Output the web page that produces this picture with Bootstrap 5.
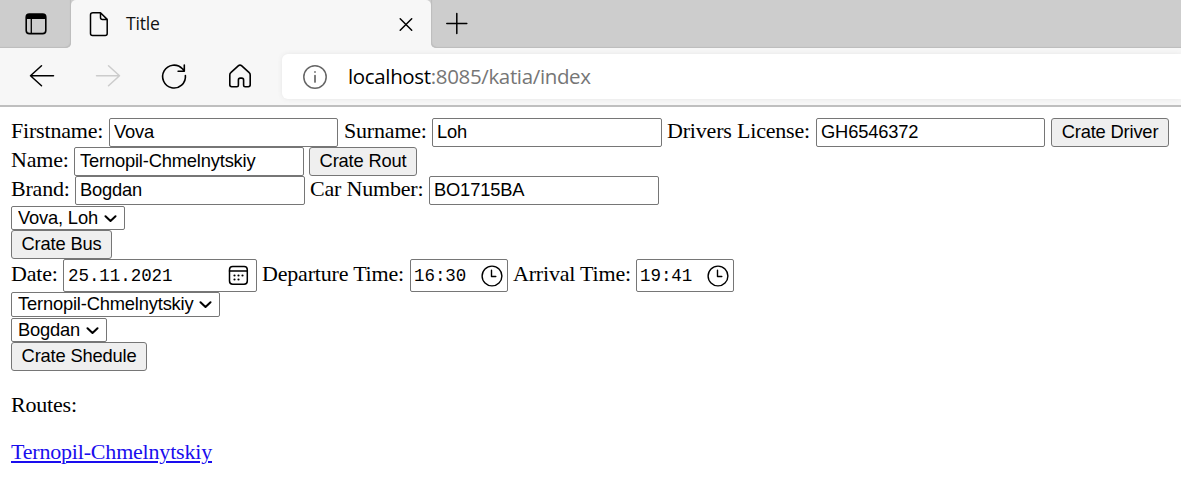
<!DOCTYPE html>
<html lang="en">
<head>
<meta charset="utf-8">
<title>Title</title>
<link href="https://cdn.jsdelivr.net/npm/bootstrap@5.3.0/dist/css/bootstrap.min.css" rel="stylesheet">
<style>
body{background:#fff;color:#000;font:22px/29px "Liberation Serif",serif;letter-spacing:-.19px;overflow:hidden}
svg{display:block;flex:none;fill:none;stroke:#000;stroke-linecap:round;stroke-linejoin:round}
.tabs{height:48px;background:#f7f7f7;font-family:"Open Sans",sans-serif}
.strip{background:#cdcdcd}
.strip-l{width:71px;border-bottom-right-radius:5px;padding:12px 0 0 24px;box-shadow:inset -1px -1px 1px #bdbdbd}
.strip-r{border-bottom-left-radius:5px;padding:12px 0 0 15px;box-shadow:inset 1px -1px 1px #bdbdbd}
.tab-slot{background:#cdcdcd linear-gradient(#f7f7f7,#f7f7f7) 0 8px no-repeat}
.tab{width:360px;padding-left:16px;background:#f7f7f7;border-radius:5px 5px 0 0}
.tab-name{font-size:17.6px;line-height:46px;height:48px;margin-left:15px;letter-spacing:-.2px;color:#111}
.tab-x{margin-right:15px}
.bar{height:59px;background:#f7f7f7;border-bottom:2px solid #bfbfbf;padding-left:28px}
.gap-nav{gap:38px;padding-top:14px}
.nav-off{stroke:#ccc}
.address{margin:6px 0 6px 28px;background:#fff;border-radius:6px 0 0 6px;padding-left:20px;box-shadow:0 0 5px #e6e6e6;font:20.5px/45px "Open Sans",sans-serif;letter-spacing:-.35px;color:#767676}
.address b{font-weight:400;color:#000}
.address-text{margin-left:20px}
.info{stroke:#666}
.page{padding:11px 0 0 11px}
.line{height:29px}
.line label{line-height:26px;white-space:nowrap;flex:none}
.box,.push,.pick{font:18.33px/21px "Liberation Sans",sans-serif;letter-spacing:-.18px;color:#000;border:1px solid #767676;border-radius:2px;flex:none;margin:0}
.box{width:230px;height:29px;padding:0 5px 2px 4px;background:#fff}
.box-s{width:229px}
.box-in{padding-left:5px}
.push{height:29px;background:#efefef;border-radius:3px;padding:0 0 2px;text-align:center;white-space:nowrap}
.pick{appearance:none;height:24px;line-height:20px;padding:0 0 1px 6px;background:#fff;width:100%;display:block}
.pick-wrap{height:24px}
.pick-wrap svg{position:absolute;right:8px;top:9px;stroke-width:2}
.stamp{height:33px;border:1px solid #767676;border-radius:2px;flex:none}
.stamp input{border:0;padding:2px 0 0;background:none;color:#000;font:17.5px/29px "Liberation Mono",monospace;letter-spacing:-.05px;min-width:0;flex:1}
.l-first{width:98px}.l-sur{width:88px;margin-left:6px}.l-lic{width:149px;margin-left:5px}
.l-name{width:63px}.l-brand{width:64px}.l-car{width:119px;margin-left:5px}
.l-date{width:52px}.l-dep{width:148px;margin-left:5px}.l-arr{width:123px;margin-left:5px}
.w-driver{width:118px;margin-left:6px}.w-rout{width:108px;margin-left:5px}.w-bus{width:101px}.w-shed{width:136px}
.s-driver{width:114px;margin-top:1px}.s-route{width:209px;height:25px}.s-bus{width:96px;margin-top:1px}
.t-date{width:194px;padding:0 7px 0 4px}.t-time{width:98px;padding:0 4px 0 3px}
.routes{margin:19px 0 18px}
.route-link{color:#1a0dee;text-decoration-thickness:2px;text-underline-offset:2px}
</style>
<script src="https://cdn.jsdelivr.net/npm/bootstrap@5.3.0/dist/js/bootstrap.bundle.min.js"></script>
</head>
<body>
<header>
  <div class="tabs d-flex">
    <div class="strip strip-l"><svg width="24" height="24" viewBox="0 0 24 24"><rect x="2.2" y="2" width="19.6" height="19.6" rx="3.2" stroke-width="1.6"/><path d="M2 7V5q0-3 3-3h14q3 0 3 3v2z" fill="#000" stroke="none"/><path d="M7.3 7v14" stroke-width="1.3"/></svg></div>
    <div class="tab-slot d-flex"><div class="tab d-flex align-items-center">
      <svg width="24" height="26" viewBox="0 0 24 26" stroke-width="1.5"><path d="M6 1.8h7.5l6.7 6.6v14q0 2-2 2H5.500q-2 0-2-2V3.800q0-2 2.500-2M13.500 1.800v4.600q0 2 2 2h4.700"/></svg>
      <span class="tab-name">Title</span>
      <svg class="ms-auto tab-x" width="20" height="20" viewBox="0 0 20 20" stroke-width="1.5"><path d="M4.2 4.700l11.500 11.500M15.700 4.700L4.200 16.200"/></svg>
    </div></div>
    <div class="strip strip-r flex-grow-1"><svg width="22" height="24" viewBox="0 0 22 24" stroke-width="1.5"><path d="M.8 11.500h20M10.800 1.500v20"/></svg></div>
  </div>
  <div class="bar d-flex">
    <div class="d-flex gap-nav">
      <svg width="28" height="28" viewBox="0 0 28 28" stroke-width="1.5"><path d="M25.500 13.700H2.500M13.500 3.700l-11 10 11 10"/></svg>
      <svg class="nav-off" width="28" height="28" viewBox="0 0 28 28" stroke-width="1.5"><path d="M2.500 13.700h23M14.500 3.700l11 10-11 10"/></svg>
      <svg width="28" height="28" viewBox="0 0 28 28" stroke-width="1.6"><path d="M25.400 13.500a11.400 11.400 0 1 1-3-6.700l1.800 2M24.300 3v6.200h-6.200"/></svg>
      <svg width="28" height="28" viewBox="0 0 28 28" stroke-width="1.6"><path d="M3.800 13q0-1.500 1-2.300l7.700-7q1.500-1.300 3 0l7.700 7q1 .8 1 2.300v9.800q0 1.900-1.900 1.900h-3.200q-1.500 0-1.500-1.500v-5.300q0-1.800-1.800-1.800h-1.600q-1.800 0-1.800 1.800v5.300q0 1.500-1.500 1.500H5.700q-1.900 0-1.900-1.900z"/></svg>
    </div>
    <div class="address d-flex flex-grow-1 align-items-center">
      <svg class="info" width="26" height="26" viewBox="0 0 26 26" stroke-width="1.5"><circle cx="13" cy="13" r="11.200"/><path d="M13 11.500v6.500M13 7.900v.2" stroke-width="1.700"/></svg>
      <span class="address-text"><b>localhost</b>:8085/katia/index</span>
    </div>
  </div>
</header>
<main class="page">
  <div class="line d-flex"><label class="l-first" for="a">Firstname:</label><input class="box box-s" id="a" value="Vova"><label class="l-sur" for="b">Surname:</label><input class="box" id="b" value="Loh"><label class="l-lic" for="c">Drivers License:</label><input class="box box-s" id="c" value="GH6546372"><button class="push w-driver">Crate Driver</button></div>
  <div class="line d-flex"><label class="l-name" for="d">Name:</label><input class="box box-in" id="d" value="Ternopil-Chmelnytskiy"><button class="push w-rout">Crate Rout</button></div>
  <div class="line d-flex"><label class="l-brand" for="e">Brand:</label><input class="box" id="e" value="Bogdan"><label class="l-car" for="f">Car Number:</label><input class="box" id="f" value="BO1715BA"></div>
  <div class="pick-wrap position-relative s-driver"><select class="pick"><option>Vova, Loh</option></select><svg width="13" height="8" viewBox="0 0 13 8"><path d="M1.500 1.200l5 4.800 5-4.800"/></svg></div>
  <div class="line d-flex"><button class="push w-bus">Crate Bus</button></div>
  <div class="d-flex">
    <label class="l-date" for="g">Date:</label>
    <div class="stamp t-date d-flex align-items-center"><input id="g" value="25.11.2021"><svg width="21" height="21" viewBox="0 0 21 21" stroke-width="1.500"><rect x="1.500" y="1.500" width="17.800" height="17.800" rx="3.200"/><path d="M1.500 6h17.800"/><path d="M6.500 10.500h.01M10.500 10.500h.01M14.500 10.500h.01M6.500 14.500h.01M10.500 14.500h.01" stroke-width="2.200"/></svg></div>
    <label class="l-dep" for="h">Departure Time:</label>
    <div class="stamp t-time d-flex align-items-center"><input id="h" value="16:30"><svg width="22" height="22" viewBox="0 0 22 22" stroke-width="1.400"><circle cx="11" cy="11" r="9.900"/><path d="M10.500 5.300v6.200h4.300"/></svg></div>
    <label class="l-arr" for="i">Arrival Time:</label>
    <div class="stamp t-time d-flex align-items-center"><input id="i" value="19:41"><svg width="22" height="22" viewBox="0 0 22 22" stroke-width="1.400"><circle cx="11" cy="11" r="9.900"/><path d="M10.500 5.300v6.200h4.300"/></svg></div>
  </div>
  <div class="pick-wrap position-relative s-route"><select class="pick h-100"><option>Ternopil-Chmelnytskiy</option></select><svg width="13" height="8" viewBox="0 0 13 8"><path d="M1.500 1.200l5 4.800 5-4.800"/></svg></div>
  <div class="pick-wrap position-relative s-bus"><select class="pick"><option>Bogdan</option></select><svg width="13" height="8" viewBox="0 0 13 8"><path d="M1.500 1.200l5 4.800 5-4.800"/></svg></div>
  <div class="line d-flex"><button class="push w-shed">Crate Shedule</button></div>
  <p class="routes">Routes:</p>
  <a class="route-link" href="#">Ternopil-Chmelnytskiy</a>
</main>
</body>
</html>
